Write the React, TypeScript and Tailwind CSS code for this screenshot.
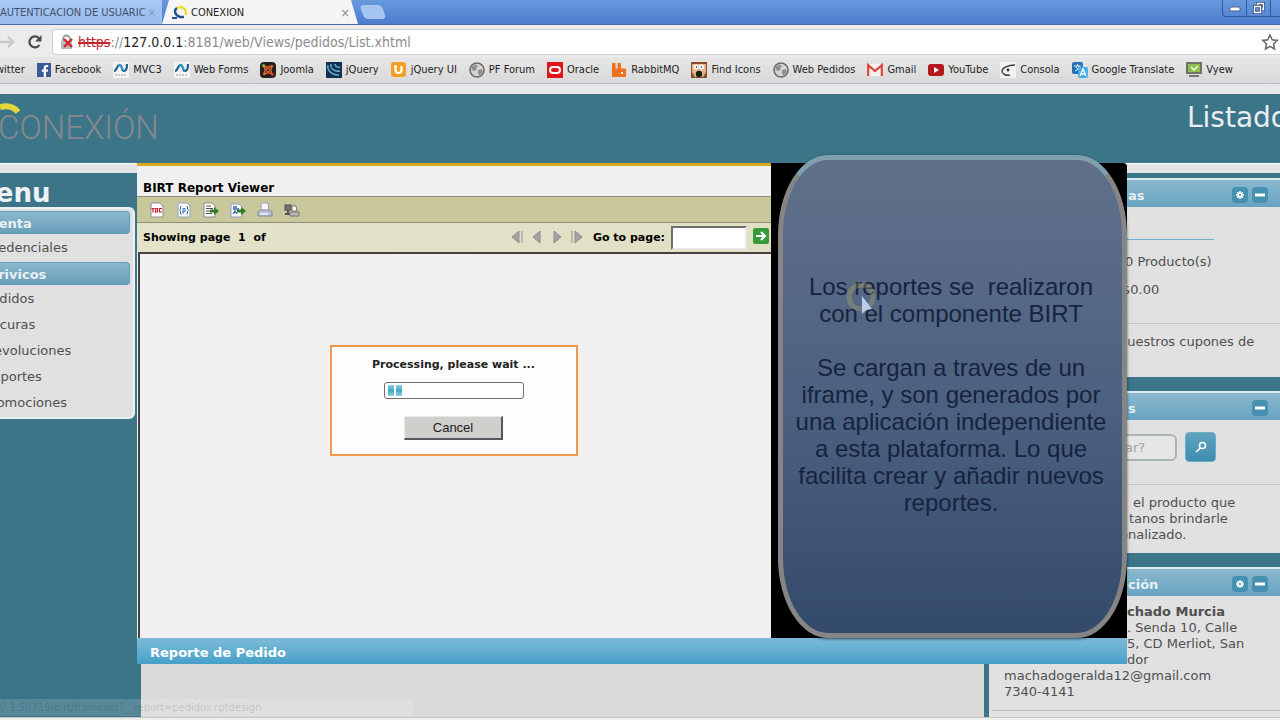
import React from "react";
import { FaFacebookF, FaJoomla } from "react-icons/fa";

const GlobeIcon = () => (
  <svg viewBox="0 0 16 16" className="size-4">
    <circle cx="8" cy="8" r="7" fill="#d4d4d4" stroke="#6a6a6a" strokeWidth="1.6" />
    <path d="M3 4.5 7 2.5l2 1.5-2 2 .5 2L5 9 2.5 7zM9 8l4-1 .5 3-3 3.5L9 12z" fill="#8d8d8d" />
  </svg>
);

const AspIcon = () => (
  <svg viewBox="0 0 16 16" className="size-4">
    <rect width="16" height="16" fill="#f4f4f6" />
    <path d="M1 9C4 9 4 2 7 3s1 6 4 6 3-4 3-7" fill="none" stroke="#1d5f8f" strokeWidth="2.2" />
    <path d="M5 3c3-1.500 3 5 6 5" fill="none" stroke="#3fa9d6" strokeWidth="1.6" />
    <path d="M2 13h12" stroke="#b9b9c0" strokeWidth="1.5" strokeDasharray="2 1" />
  </svg>
);

const FacebookIcon = () => (
  <span className="flex size-[14px] items-end justify-end bg-[#3b5998]">
    <FaFacebookF className="size-3 text-white" />
  </span>
);

const JoomlaIcon = () => (
  <span className="relative flex size-4 items-center justify-center rounded-sm bg-[#26201c]">
    <FaJoomla className="size-3 text-[#e0622c]" />
    <span className="absolute top-[2px] left-[2px] size-[3px] rounded-full bg-[#7ab23c]" />
    <span className="absolute right-[2px] bottom-[2px] size-[3px] rounded-full bg-[#d5302c]" />
  </span>
);

const JqueryIcon = () => (
  <svg viewBox="0 0 16 16" className="size-4">
    <rect width="16" height="16" fill="#12304f" />
    <path d="M2 3c-1 5 3 10 11 10M5 2c-1 4 3 8 9 7M9 2c0 2 2 4 5 3" fill="none" stroke="#5fa8cf" strokeWidth="1.6" />
  </svg>
);

const JqueryUiIcon = () => (
  <svg viewBox="0 0 16 16" className="size-4">
    <rect width="15" height="15" rx="3" fill="#f2a024" />
    <path d="M3 4.500h3M4.500 4.500V8c0 4 6 4 6 0V4" fill="none" stroke="#fff" strokeWidth="2.2" />
  </svg>
);

const OracleIcon = () => (
  <svg viewBox="0 0 16 16" className="size-4">
    <rect width="16" height="16" fill="#e3131b" />
    <rect x="3" y="5" width="10" height="6" rx="3" fill="none" stroke="#fff" strokeWidth="2" />
  </svg>
);

const RabbitIcon = () => (
  <svg viewBox="0 0 16 16" className="size-4">
    <path d="M1 1h3.5v5.5h2V1H10v5.5h5V15H1z" fill="#f0701e" />
    <rect x="10" y="10" width="2" height="2" fill="#fff" />
  </svg>
);

const FindIcon = () => (
  <svg viewBox="0 0 16 16" className="size-4">
    <rect width="16" height="16" fill="#8b4a2c" />
    <path d="M1 2h14v8l-3 5H4l-3-5z" fill="#e5b48c" />
    <circle cx="5" cy="5" r="2.500" fill="#fff" />
    <circle cx="10.5" cy="5" r="2.500" fill="#fff" />
    <circle cx="5.5" cy="5" r=".8" fill="#222" />
    <circle cx="10.5" cy="5" r=".8" fill="#222" />
    <circle cx="8" cy="12" r="3.200" fill="#16240f" />
  </svg>
);

const GmailIcon = () => (
  <svg viewBox="0 0 16 16" className="size-4">
    <rect y="2" width="16" height="12" fill="#f7f2f2" />
    <path d="M1.2 14V3.2L8 9l6.8-5.8V14" fill="none" stroke="#d9463c" strokeWidth="2.2" />
  </svg>
);

const YoutubeIcon = () => (
  <svg viewBox="0 0 16 16" className="size-4">
    <rect y="2" width="16" height="12" rx="3" fill="#b3181d" />
    <path d="M6 5v6l5-3z" fill="#fff" />
  </svg>
);

const ConsolaIcon = () => (
  <svg viewBox="0 0 16 16" className="size-4">
    <rect width="16" height="16" fill="#f3f3f3" />
    <path d="M15 3C8 3 2 6 2 9s4 5 8 4" fill="none" stroke="#3d3d3d" strokeWidth="1.4" />
    <circle cx="8" cy="8" r="1.400" fill="#2d2d2d" />
  </svg>
);

const TranslateIcon = () => (
  <svg viewBox="0 0 16 16" className="size-4">
    <rect width="11" height="12" rx="2" fill="#2a6fb4" />
    <path d="M2 4h7M5.500 2v2M3 9c3-1 4-3 4-5M4 5c1 2 3 3 4 4" stroke="#e8f3ff" fill="none" />
    <rect x="6" y="5" width="10" height="11" rx="2" fill="#45aee6" />
    <path d="m8 14 3-7 3 7M9 12h4" stroke="#fff" strokeWidth="1.3" fill="none" />
  </svg>
);

const VyewIcon = () => (
  <svg viewBox="0 0 16 16" className="size-4">
    <rect width="16" height="12" fill="#6d7468" />
    <rect x="2" y="2" width="12" height="8" fill="#8cc04a" />
    <path d="m5 5 3 3 4-4" fill="none" stroke="#f1f8e4" strokeWidth="1.6" />
    <path d="M3 14h10" stroke="#777" strokeWidth="2" />
  </svg>
);

const BOOKMARKS = [
  { name: "Facebook", Icon: FacebookIcon },
  { name: "MVC3", Icon: AspIcon },
  { name: "Web Forms", Icon: AspIcon },
  { name: "Joomla", Icon: JoomlaIcon },
  { name: "jQuery", Icon: JqueryIcon },
  { name: "jQuery UI", Icon: JqueryUiIcon },
  { name: "PF Forum", Icon: GlobeIcon },
  { name: "Oracle", Icon: OracleIcon },
  { name: "RabbitMQ", Icon: RabbitIcon },
  { name: "Find Icons", Icon: FindIcon },
  { name: "Web Pedidos", Icon: GlobeIcon },
  { name: "Gmail", Icon: GmailIcon },
  { name: "YouTube", Icon: YoutubeIcon },
  { name: "Consola", Icon: ConsolaIcon },
  { name: "Google Translate", Icon: TranslateIcon },
  { name: "Vyew", Icon: VyewIcon },
];

const MENU = [
  { title: "Cuenta", items: ["Credenciales"] },
  { title: "Serivicos", items: ["Pedidos", "Vacuras", "Devoluciones", "Reportes", "Promociones"] },
];

const TabBar = () => (
  <div className="flex h-[25px] items-end justify-between border-b border-[#4a6aa8] bg-linear-to-b from-[#6699de] to-[#4f7dcd]">
    <div className="flex h-full min-w-0 items-stretch" role="tablist">
      <button role="tab" className="flex w-[162px] items-center justify-between bg-linear-to-b from-[#a9c8f2] to-[#98bcee] pt-[2px] text-[11px] whitespace-nowrap text-[#3f506b]">
        <span className="overflow-hidden">AUTENTICACION DE USUARIC</span>
        <span className="pr-[6px] text-[#7c93b6]">×</span>
      </button>
      <div className="flex w-[196px] items-center bg-[#f5f5f5] pt-[2px] pr-2 pl-[10px] [clip-path:polygon(7px_0,189px_0,100%_100%,0_100%)]">
        <svg viewBox="0 0 16 14" className="h-[14px] w-4">
          <path d="M5 2C1 4 3 12 12 11" fill="none" stroke="#1f4f8a" strokeWidth="2.500" />
          <path d="M5 2c6-2 9 0 9 7" fill="none" stroke="#e9dd35" strokeWidth="2.500" />
          <path d="M0 12h5" stroke="#1f4f8a" strokeWidth="2" />
        </svg>
        <button role="tab" aria-selected="true" className="grow pl-[3px] text-left text-[11px] text-[#222]">
          CONEXION
        </button>
        <button aria-label="Cerrar" className="text-[13px] text-[#8b8b8b]">
          ×
        </button>
      </div>
      <button aria-label="Nueva pestaña" className="my-[5px] ml-1 w-[22px] skew-x-[20deg] rounded-sm bg-[#a6c4f0]" />
    </div>
    <div className="flex h-[17px] self-start rounded-bl border-b border-l border-[#34599c] text-white">
      <button aria-label="Minimizar" className="flex w-6 items-center justify-center border-r border-[#34599c]">
        <svg viewBox="0 0 12 12" className="size-3">
          <rect x="1" y="5" width="10" height="4" rx="1" fill="#fff" stroke="#4c5f80" />
        </svg>
      </button>
      <button aria-label="Restaurar" className="flex w-6 items-center justify-center border-r border-[#34599c]">
        <svg viewBox="0 0 12 12" className="size-3" fill="none">
          <path d="M4.500 3V1.500h6v6H9M1.500 4.500h6v6h-6z" stroke="#34486f" strokeWidth="3" />
          <path d="M4.500 3V1.500h6v6H9M1.500 4.500h6v6h-6z" stroke="#fff" strokeWidth="1.4" />
        </svg>
      </button>
      <span className="w-[9px]" />
    </div>
  </div>
);

const AddressBar = () => (
  <div className="flex h-8 items-center bg-[#ececec] pt-[2px]">
    <button aria-label="Adelante" className="w-5">
      <svg viewBox="0 0 20 16" className="h-4 w-5">
        <path d="M0 8h12M8 3l5 5-5 5" fill="none" stroke="#c9c9c9" strokeWidth="2.500" />
      </svg>
    </button>
    <button aria-label="Recargar" className="ml-[7px] w-4">
      <svg viewBox="0 0 16 16" className="size-4">
        <path d="M12.500 11A5.500 5.500 0 1 1 12 4.200" fill="none" stroke="#4a4a4a" strokeWidth="2.200" />
        <path d="M14.500 1v6.500H8z" fill="#4a4a4a" />
      </svg>
    </button>
    <div className="ml-[9px] flex h-[26px] min-w-0 grow items-center rounded-l border border-r-0 border-[#cfcfcf] bg-white pl-[6px]">
      <svg viewBox="0 0 16 16" className="size-4 shrink-0">
        <path d="M4 7V5a3.500 3.500 0 0 1 7 0v2" fill="none" stroke="#9a9a9a" strokeWidth="1.800" />
        <rect x="2" y="7" width="11" height="8" fill="#b9b9b9" />
        <path d="m5 5 8 8M13 5l-8 8" stroke="#d8222a" strokeWidth="2.400" />
      </svg>
      <div className="ml-[3px] grow text-[14px] whitespace-nowrap text-[#8b8b8b]">
        <span className="text-[#c0262c] line-through decoration-2">https</span>://
        <span className="text-[#222]">127.0.0.1</span>:8181/web/Views/pedidos/List.xhtml
      </div>
      <button aria-label="Favorito" className="w-[19px]">
        <svg viewBox="0 0 18 18" className="size-[18px]">
          <path d="m9 2 2.200 4.800 5 .6-3.700 3.500 1 5.100L9 13.400 4.500 16l1-5.100L1.800 7.400l5-.6z" fill="#fff" stroke="#666" strokeWidth="1.500" />
        </svg>
      </button>
    </div>
  </div>
);

const BookmarksBar = () => (
  <nav className="flex h-[27px] items-center gap-3 overflow-hidden border-b border-[#b4bcc2] bg-linear-to-b from-[#e6e6e6] to-[#d9d9d9] text-[11px] whitespace-nowrap text-[#222]">
    <a href="#" className="-ml-1">
      witter
    </a>
    {BOOKMARKS.map(({ name, Icon }) => (
      <a key={name} href="#" className="flex shrink-0 items-center gap-1">
        <Icon />
        {name}
      </a>
    ))}
  </nav>
);

const SideMenu = () => (
  <aside className="w-[141px] shrink-0">
    <h2 className="-ml-[30px] h-[34px] pt-1 text-[26px] leading-8 font-bold text-[#eef2f4]">Menu</h2>
    <div className="mr-[6px] rounded-r-md border-2 border-l-0 border-[#e9f1f4] bg-[#e0e0e0] pt-[2px] text-[13px]">
      {MENU.map((group) => (
        <div key={group.title}>
          <h3 className="mr-[3px] -ml-5 h-[23px] rounded-r border border-l-0 border-[#5f9db8] bg-linear-to-b from-[#8bb8cd] to-[#689fba] leading-[23px] font-bold text-[#e8f0f4]">
            {group.title}
          </h3>
          <ul className="-ml-4 text-[#4f4f4f]">
            {group.items.map((item) => (
              <li key={item} className="h-[26px] leading-7 last:mb-[2px]">
                <a href="#">{item}</a>
              </li>
            ))}
          </ul>
        </div>
      ))}
    </div>
  </aside>
);

const HeaderButton = ({ kind }: { kind: "gear" | "minus" }) => (
  <button aria-label={kind === "gear" ? "Opciones" : "Minimizar panel"} className="flex size-4 items-center justify-center rounded bg-[#4691b2]">
    {kind === "gear" ? (
      <svg viewBox="0 0 10 10" className="size-2">
        <path d="M5 0v10M0 5h10M1.500 1.500l7 7M8.500 1.500l-7 7" stroke="#fff" strokeWidth="1.800" />
        <circle cx="5" cy="5" r="3.200" fill="#fff" />
        <circle cx="5" cy="5" r="1.300" fill="#4691b2" />
      </svg>
    ) : (
      <svg viewBox="0 0 10 10" className="size-[10px]">
        <path d="M0 5h10" stroke="#fff" strokeWidth="3" />
      </svg>
    )}
  </button>
);

interface PanelProps {
  title: string;
  gear?: boolean;
  className?: string;
  children: React.ReactNode;
}

const Panel = ({ title, gear, className, children }: PanelProps) => (
  <section className={className}>
    <header className="flex h-[29px] items-center gap-1 border-t-2 border-[#dcebf2] bg-linear-to-b from-[#8ab8cd] to-[#67a4c2] pt-[2px] pr-3 pl-[139px] text-[13px] font-bold text-[#e6f0f4]">
      <h3 className="grow pt-[2px]">{title}</h3>
      {gear && <HeaderButton kind="gear" />}
      <HeaderButton kind="minus" />
    </header>
    <div className="text-[13px] leading-4 text-[#4f4f4f]">{children}</div>
  </section>
);

const RightColumn = () => (
  <aside className="flex w-[291px] shrink-0 flex-col gap-[14px] pt-[5px] whitespace-nowrap">
    <Panel title="as" gear className="h-[199px] bg-[#e1e1e1]">
      <div className="mr-[66px] h-[33px] border-b border-[#6fb0cb]" />
      <p className="pt-[14px] pl-[136px]">0 Producto(s)</p>
      <p className="pt-3 pl-[133px]">$0.00</p>
      <hr className="mt-[25px] border-[#c3c3c3]" />
      <p className="pt-[10px] pl-[130px]">nuestros cupones de</p>
    </Panel>
    <Panel title="s" className="h-[162px] bg-[#e1e1e1]">
      <form className="flex items-center gap-2 pt-3 pl-[90px]">
        <input
          type="text"
          aria-label="Buscar"
          placeholder="scar?"
          className="h-[27px] w-[98px] rounded-md border-2 border-[#a9b4b8] bg-[#e6e6e6] pl-[30px] placeholder:text-[#a2a2a2]"
        />
        <button type="button" aria-label="Buscar" className="flex h-[30px] w-[31px] items-center justify-center rounded border border-[#67b0cb] bg-linear-to-b from-[#5fa3c0] to-[#3f8caf]">
          <svg viewBox="0 0 12 12" className="size-3" fill="none" stroke="#fff" strokeWidth="1.600">
            <circle cx="7.500" cy="4.500" r="3" />
            <path d="M5.500 7 1 11" />
          </svg>
        </button>
      </form>
      <hr className="mt-[22px] border-[#c3c3c3]" />
      <p className="pt-[10px] pl-[144px]">el producto que</p>
      <p className="pl-[140px]">tanos brindarle</p>
      <p className="pl-[131px]">onalizado.</p>
    </Panel>
    <Panel title="ción" gear className="grow bg-[#e1e1e1]">
      <div className="pt-2 pl-[138px]">
        <p className="font-bold">chado Murcia</p>
        <p>. Senda 10, Calle</p>
        <p>5, CD Merliot, San</p>
        <p>dor</p>
      </div>
      <p className="pl-[15px]">machadogeralda12@gmail.com</p>
      <p className="pl-[15px]">7340-4141</p>
      <hr className="mt-[10px] ml-[3px] border-[#b8b8b8]" />
    </Panel>
  </aside>
);

const ReportToolbar = () => (
  <div className="flex h-[27px] items-center gap-[11px] border-y border-[#8f8e78] bg-[#c9c79c] pt-px pl-3">
    <button aria-label="Tabla de contenido">
      <svg viewBox="0 0 16 16" className="size-4">
        <path d="M2 1h9l3 3v11H2z" fill="#fff" stroke="#8d8d8d" />
        <path d="M2.500 6.500h3M4 6.500v4M6.500 6.500h2v3.500h-2zM13 6.500h-2.500v3.500H13" fill="none" stroke="#c8242b" strokeWidth="1.200" />
      </svg>
    </button>
    <button aria-label="Parámetros">
      <svg viewBox="0 0 16 16" className="size-4">
        <path d="M2 1h9l3 3v11H2z" fill="#fff" stroke="#8da0b8" />
        <path d="M5.500 4.500h-1v3l-1 .8 1 .7v3h1M10.500 4.500h1v3l1 .8-1 .7v3h-1M7 12V6.500h2v3H7" fill="none" stroke="#3b74b6" />
      </svg>
    </button>
    <button aria-label="Exportar datos">
      <svg viewBox="0 0 16 16" className="size-4">
        <path d="M1 1h8l3 3v11H1z" fill="#fff" stroke="#8d8d8d" />
        <path d="M3 4h5M3 6.500h7M3 9h5M3 11.500h6" stroke="#555" />
        <path d="M7 7.500h4V5l5 4-5 4v-2.500H7z" fill="#2f7a2b" />
      </svg>
    </button>
    <button aria-label="Exportar reporte">
      <svg viewBox="0 0 16 16" className="size-4">
        <path d="M1 2h8l3 3v10H1z" fill="#fff" stroke="#8da0b8" />
        <path d="M3 5h4M3 7h6M3 12l2-3 2 3" stroke="#2e63b0" strokeWidth="1.300" fill="none" />
        <path d="M7 7.500h4V5l5 4-5 4v-2.500H7z" fill="#2f7a2b" />
      </svg>
    </button>
    <button aria-label="Imprimir">
      <svg viewBox="0 0 16 16" className="size-4">
        <path d="M4 1h7l1 8H4z" fill="#f4f6fa" stroke="#9aa3b4" />
        <path d="m1 10 2-2h10l2 2v4H1z" fill="#b9c2d2" stroke="#7f899c" />
        <path d="M3 12h8" stroke="#f3f5f8" strokeWidth="1.500" />
      </svg>
    </button>
    <button aria-label="Imprimir en servidor">
      <svg viewBox="0 0 16 16" className="size-4">
        <rect x="1" y="3" width="6" height="5" fill="#777" stroke="#4d4d4d" />
        <path d="M1 12h6M4 8v4" stroke="#555" strokeWidth="2" />
        <path d="M8 4h4l1 5H8z" fill="#fff" stroke="#777" />
        <path d="M6 10h9v4H6z" fill="#b8b8b8" stroke="#777" />
      </svg>
    </button>
  </div>
);

const NAV_ICONS = [
  { label: "Primera página", d: "M9 1v12L2 7zM12 1v12" },
  { label: "Página anterior", d: "M10 1v12L3 7z" },
  { label: "Página siguiente", d: "M4 1v12l7-6z" },
  { label: "Última página", d: "M5 1v12l7-6zM2 1v12" },
];

const ReportNav = () => (
  <div className="flex h-[29px] items-center bg-linear-to-r from-[#e3e3c9] to-[#e1e0c5] pl-[6px] font-bold text-black">
    <span className="grow pt-[2px] text-[11px] whitespace-pre">Showing page  1  of</span>
    <div className="mr-[9px] flex gap-[6px] pb-[2px]">
      {NAV_ICONS.map((icon) => (
        <button key={icon.label} aria-label={icon.label}>
          <svg viewBox="0 0 14 14" className="size-[14px]">
            <path d={icon.d} fill="#a2a2a6" stroke="#8d8d92" />
          </svg>
        </button>
      ))}
    </div>
    <label htmlFor="gotoPage" className="mr-[6px] pt-[2px] text-[11px]">
      Go to page:
    </label>
    <input id="gotoPage" type="text" className="h-6 w-[76px] border-2 border-t-[#6f6f6f] border-r-[#e6e6e6] border-b-[#e6e6e6] border-l-[#6f6f6f] bg-white px-1 font-normal" />
    <button aria-label="Ir a la página" className="mr-[2px] ml-[6px] pb-[3px]">
      <svg viewBox="0 0 16 16" className="size-4">
        <rect width="16" height="16" rx="2" fill="#3a9a3b" />
        <path d="M3 8h9M8 4l4 4-4 4" fill="none" stroke="#fff" strokeWidth="2" />
      </svg>
    </button>
  </div>
);

const Processing = () => (
  <div className="flex h-[111px] w-[248px] flex-col items-center border-2 border-[#f0994c] bg-[#fdfdfd] pt-[10px]">
    <p className="text-[11px] leading-4 font-bold whitespace-nowrap text-[#222]">Processing, please wait ...</p>
    <div role="progressbar" aria-label="Progreso" className="mt-[9px] flex h-[17px] w-[140px] items-center gap-[2px] rounded-[3px] border border-[#6e6e6e] bg-white pl-[3px]">
      <span className="h-[11px] w-[6px] bg-linear-to-b from-[#8fd0e0] via-[#3ea9c6] to-[#8fd0e0]" />
      <span className="h-[11px] w-[6px] bg-linear-to-b from-[#8fd0e0] via-[#3ea9c6] to-[#8fd0e0]" />
    </div>
    <button className="mt-[17px] h-6 w-[99px] border border-t-[#e9e9e9] border-r-2 border-r-[#55555a] border-b-2 border-b-[#55555a] border-l-[#e9e9e9] bg-[#cfcfcc] font-['Liberation_Sans',sans-serif] text-[13px] text-[#222]">
      Cancel
    </button>
  </div>
);

const Callout = () => (
  <div className="absolute -top-2 right-0 bottom-[26px] flex w-[349px] items-center justify-center rounded-[50px/80px] border-[5px] border-[#858585] border-t-[#7f9fad] bg-linear-to-b from-[#60708a] via-[#4b607f] via-55% to-[#344a6a] pb-1 shadow-[0_1px_3px_rgba(0,0,0,0.6)]">
    <p className="pr-[3px] text-center font-['Liberation_Sans',sans-serif] text-[24px] leading-[27px] whitespace-pre text-[#16233f]">
      Los reportes se  realizaron
      <br />
      con el componente BIRT
      <br />
      <br />
      Se cargan a traves de un
      <br />
      iframe, y son generados por
      <br />
      una aplicación independiente
      <br />
      a esta plataforma. Lo que
      <br />
      facilita crear y añadir nuevos
      <br />
      reportes.
    </p>
    <svg viewBox="0 0 32 32" className="absolute top-[122px] left-[62px] size-8">
      <circle cx="16" cy="15" r="12" fill="none" stroke="#c9b95a" strokeOpacity=".28" strokeWidth="5" />
      <path d="M17 14v18l4-4 6-1z" fill="#b9cdf0" />
    </svg>
  </div>
);

const ReportDialog = () => (
  <div role="dialog" aria-label="Reporte de Pedido" className="absolute top-[69px] right-[153px] left-[137px] flex h-[501px] flex-col">
    <div className="flex min-h-0 grow rounded-tr bg-black">
      <div className="flex w-[634px] flex-col border-t-[3px] border-[#d9a91c] bg-[#f0f0f0]">
        <h2 className="h-[30px] pt-[14px] pl-[6px] text-[12px] leading-4 font-bold text-black">BIRT Report Viewer</h2>
        <ReportToolbar />
        <ReportNav />
        <div className="ml-px flex grow items-start justify-center border-t-2 border-l-2 border-[#45413f] pt-[91px] pr-1">
          <Processing />
        </div>
      </div>
    </div>
    <div className="h-[26px] bg-linear-to-b from-[#7cbad8] via-[#62aed1] to-[#459fc8] pl-[13px] text-[13px] leading-[30px] font-bold text-white">
      Reporte de Pedido
    </div>
    <Callout />
  </div>
);

export default function App() {
  return (
    <div className="flex min-h-screen flex-col overflow-hidden bg-[#e4e6ea] font-['DejaVu_Sans',sans-serif]">
      <div className="font-['DejaVu_Sans_Condensed','DejaVu_Sans',sans-serif]">
        <TabBar />
        <AddressBar />
        <BookmarksBar />
      </div>

      <div className="relative mt-[10px] flex grow flex-col">
        <header className="flex h-[69px] justify-between overflow-hidden bg-[#3c7488]">
          <div className="relative pt-[13px]">
            <svg viewBox="0 0 20 20" className="absolute top-[9px] left-0 size-5">
              <path d="M0 4q12-3 18 5" fill="none" stroke="#e2d83a" strokeWidth="6" />
            </svg>
            <span className="-ml-[2px] font-['Roboto',sans-serif] text-[33px] leading-[42px] font-light text-[#85898f]">CONEXIÓN</span>
          </div>
          <h1 className="-mr-2 pt-[6px] text-[28px] leading-9 text-[#e9eef0]">Listado</h1>
        </header>
        <div className="h-[10px] border-t border-white bg-[#e4e4e4]" />

        <div className="flex grow bg-[#3c7488]">
          <SideMenu />
          <main className="min-w-0 grow bg-[#dadada]" />
          <div className="w-[5px]" />
          <RightColumn />
        </div>
        <div className="h-[3px] border-t border-[#c8c8c8] bg-[#eeeeee]" />

        <ReportDialog />
        <div className="absolute bottom-1 left-0 h-[17px] w-[413px] overflow-hidden bg-white/15 font-['DejaVu_Sans_Condensed','DejaVu_Sans',sans-serif] text-[11px] leading-[17px] whitespace-nowrap text-black/15">
          0.1:50719/birt/frameset?__report=pedidos.rptdesign
        </div>
      </div>
    </div>
  );
}
